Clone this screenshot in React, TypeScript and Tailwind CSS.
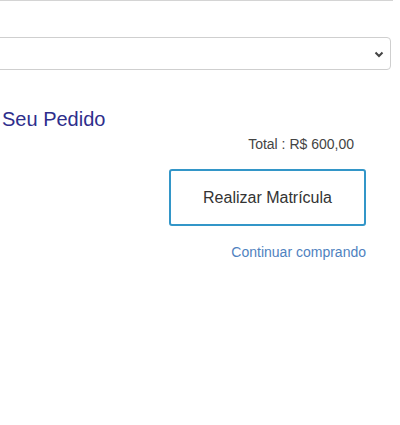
export default function App() {
  return (
    <div className="w-[400px] h-[425px] overflow-hidden bg-white font-['Liberation_Sans',Arial,sans-serif]">
      <div className="w-[393px] border-t border-[#d4d4d4]" />

      <div className="pt-[36px] pr-[9px] -ml-[12px]">
        <div className="h-[33px] border border-[#cfcfcf] rounded-[4px] flex items-center justify-end pr-[6px]">
          <svg width="10" height="10" viewBox="0 0 10 10" className="text-[#444]">
            <path d="M1.5 3.5 L5 7 L8.5 3.5" fill="none" stroke="currentColor" strokeWidth="2" />
          </svg>
        </div>
      </div>

      <h2 className="mt-[37px] pl-[2px] text-[20px] leading-[24px] text-[#2e2e8c]">Seu Pedido</h2>

      <div className="w-[366px] flex flex-col items-end">
        <p className="mt-[5px] mr-[12px] text-[14px] leading-[16px] text-[#444]">Total : R$ 600,00</p>
        <button className="mt-[17px] w-[197px] h-[57px] border-2 border-[#3396c8] rounded-[3px] text-[16px] text-[#333] bg-white">
          Realizar Matrícula
        </button>
        <a className="mt-[18px] text-[14px] leading-[17px] text-[#4f82c0]">Continuar comprando</a>
      </div>
    </div>
  );
}
